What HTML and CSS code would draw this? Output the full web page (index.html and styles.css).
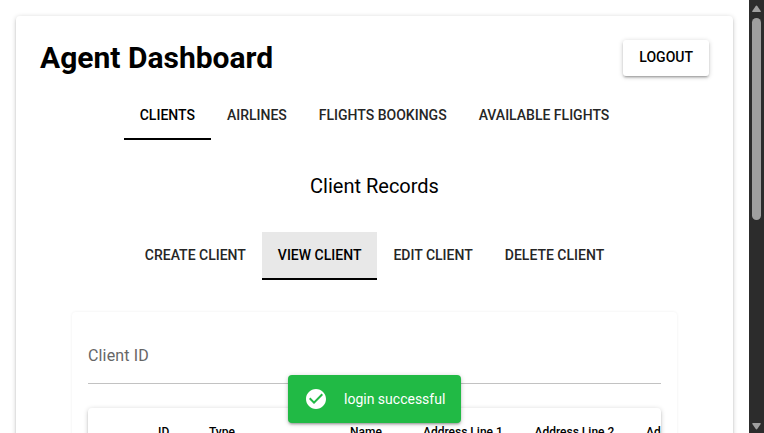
FILE: index.html
```html
<!DOCTYPE html>
<html lang="en">
<head>
<meta charset="utf-8">
<title>Agent Dashboard</title>
<link rel="stylesheet" href="styles.css">
</head>
<body>
<main class="page">
  <section class="card">
    <header class="card-header">
      <h1 class="title">Agent Dashboard</h1>
      <button class="btn">LOGOUT</button>
    </header>
    <nav class="tabs">
      <a class="tab active">CLIENTS</a>
      <a class="tab">AIRLINES</a>
      <a class="tab">FLIGHTS BOOKINGS</a>
      <a class="tab">AVAILABLE FLIGHTS</a>
    </nav>
    <h2 class="subtitle">Client Records</h2>
    <nav class="tabs">
      <a class="tab">CREATE CLIENT</a>
      <a class="tab active hover">VIEW CLIENT</a>
      <a class="tab">EDIT CLIENT</a>
      <a class="tab">DELETE CLIENT</a>
    </nav>
    <section class="panel">
      <div class="field">Client ID</div>
      <div class="table">
        <div class="table-head">
          <span>ID</span>
          <span>Type</span>
          <span>Name</span>
          <span>Address Line 1</span>
          <span>Address Line 2</span>
          <span>Address Line 3</span>
        </div>
      </div>
    </section>
  </section>
</main>
<aside class="scrollbar">
  <svg class="arrow" viewBox="0 0 9 8"><path d="M3.6 1.2Q4.5 0 5.4 1.2L8.7 6Q9.2 7 8 7H1Q-.2 7 .3 6Z"/></svg>
  <div class="thumb"></div>
  <svg class="arrow down" viewBox="0 0 9 8"><path d="M3.6 6.8Q4.5 8 5.4 6.8L8.7 2Q9.2 1 8 1H1Q-.2 1 .3 2Z"/></svg>
</aside>
<div class="toast" role="status">
  <svg class="toast-icon" viewBox="0 0 24 24"><path d="M12 2C6.48 2 2 6.48 2 12s4.48 10 10 10 10-4.48 10-10S17.52 2 12 2zm-2 15l-5-5 1.41-1.41L10 14.17l7.59-7.59L19 8l-9 9z"/></svg>
  <span>login successful</span>
</div>
</body>
</html>
```
FILE: styles.css
```css
* { box-sizing: border-box; }

body {
  margin: 0;
  height: 100vh;
  display: flex;
  overflow: hidden;
  background: #fff;
  color: #000;
  font: 400 14px/1.5 Roboto, sans-serif;
}

.page {
  flex: 1;
  min-width: 0;
  height: 100vh;
  overflow: hidden;
  padding: 16px;
}

.card {
  height: 700px;
  padding: 24px;
  border-radius: 4px;
  box-shadow: 0 1px 5px rgba(0, 0, 0, .2), 0 2px 2px rgba(0, 0, 0, .14), 0 3px 1px -2px rgba(0, 0, 0, .12);
}

.card-header {
  display: flex;
  justify-content: space-between;
  align-items: center;
  height: 36px;
  margin-bottom: 16px;
}

.title {
  margin: 0;
  font-size: 30px;
  font-weight: 700;
  line-height: 36px;
}

.btn {
  height: 36px;
  padding: 0 16px 2px;
  border: 0;
  border-radius: 3px;
  background: #fff;
  color: #000;
  font: 500 14px/24px Roboto, sans-serif;
  box-shadow: 0 1px 5px rgba(0, 0, 0, .2), 0 2px 2px rgba(0, 0, 0, .14), 0 3px 1px -2px rgba(0, 0, 0, .12);
}

.tabs {
  display: flex;
  justify-content: center;
}

.tab {
  height: 48px;
  padding: 0 16px;
  border-bottom: 2px solid transparent;
  color: #262626;
  font-weight: 500;
  line-height: 47px;
}

.tab.active {
  border-color: #000;
  color: #000;
}

.tab.hover { background: #e8e8e8; }

.subtitle {
  margin: 30px 0;
  text-align: center;
  font-size: 20px;
  font-weight: 400;
  line-height: 32px;
}

.panel {
  height: 500px;
  margin: 32px 32px 0;
  padding: 16px;
  border-radius: 4px;
  box-shadow: 0 0 3px rgba(0, 0, 0, .07);
}

.field {
  height: 56px;
  border-bottom: 1px solid #c2c2c2;
  color: #666;
  font-size: 16px;
  letter-spacing: .15px;
  line-height: 56px;
}

.table {
  height: 400px;
  margin-top: 24px;
  overflow: hidden;
  border-radius: 4px;
  box-shadow: 0 1px 5px rgba(0, 0, 0, .2), 0 2px 2px rgba(0, 0, 0, .14), 0 3px 1px -2px rgba(0, 0, 0, .12);
}

.table-head {
  display: grid;
  grid-template-columns: 51px 141px 73px 111.5px 111.5px 112px;
  padding-left: 70px;
  font-size: 12px;
  font-weight: 500;
  line-height: 48px;
  white-space: nowrap;
}

.scrollbar {
  width: 15px;
  display: flex;
  flex-direction: column;
  align-items: center;
  padding: 5px 0 3px;
  background: #2c2c2c;
}

.arrow {
  width: 9px;
  height: 8px;
  fill: #9f9f9f;
}

.thumb {
  width: 9px;
  height: 202px;
  margin-top: 5px;
  border-radius: 5px;
  background: #9f9f9f;
}

.arrow.down { margin-top: auto; }

.toast {
  position: absolute;
  left: 288px;
  bottom: 10px;
  display: flex;
  align-items: center;
  gap: 16px;
  height: 48px;
  padding: 0 16px;
  border-radius: 4px;
  background: #21ba45;
  color: #fff;
  white-space: nowrap;
  box-shadow: 0 1px 5px rgba(0, 0, 0, .2), 0 2px 2px rgba(0, 0, 0, .14), 0 3px 1px -2px rgba(0, 0, 0, .12);
}

.toast-icon {
  width: 24px;
  height: 24px;
  fill: #fff;
}
```
